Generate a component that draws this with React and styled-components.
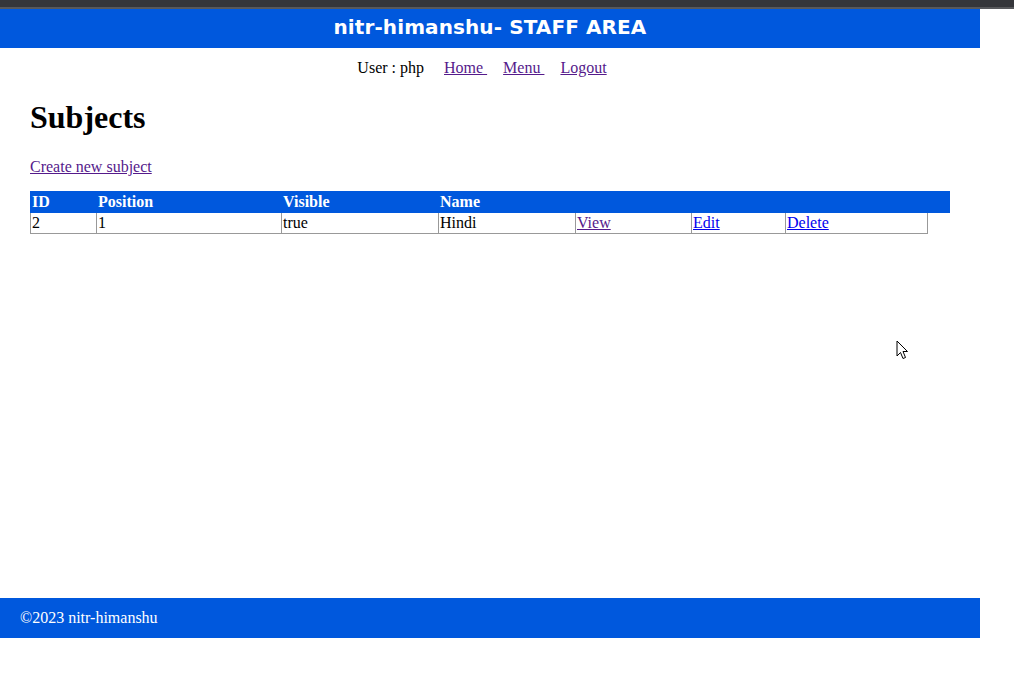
import React from "react";
import styled, { createGlobalStyle } from "styled-components";

const GlobalStyle = createGlobalStyle`
  html, body {
    margin: 0;
    padding: 0;
    background: #fff;
  }
  body {
    font-family: "Liberation Serif", "Times New Roman", serif;
    font-size: 16px;
    color: #000;
  }
`;

const COLUMNS = "66px 185px 157px 137px 116px 94px 143px";

const subjects = [{ id: 2, position: 1, visible: "true", name: "Hindi" }];

export default function App() {
  return (
    <>
      <GlobalStyle />
      <Page>
        <BrowserBar />
        <Header>nitr-himanshu- STAFF AREA</Header>
        <Body>
          <Nav>
            <User>User : php </User>
            <NavLink href="#" $visited>Home </NavLink>
            <NavLink href="#" $visited>Menu </NavLink>
            <NavLink href="#" $visited>Logout</NavLink>
          </Nav>
          <Main>
            <Title>Subjects</Title>
            <Para>
              <Link href="#" $visited>Create new subject</Link>
            </Para>
            <Table>
              <HeadRow>
                <HeadCell>ID</HeadCell>
                <HeadCell>Position</HeadCell>
                <HeadCell>Visible</HeadCell>
                <HeadCell>Name</HeadCell>
              </HeadRow>
              {subjects.map((s) => (
                <DataRow key={s.id}>
                  <Cell>{s.id}</Cell>
                  <Cell>{s.position}</Cell>
                  <Cell>{s.visible}</Cell>
                  <Cell>{s.name}</Cell>
                  <Cell>
                    <Link href="#" $visited>View</Link>
                  </Cell>
                  <Cell>
                    <Link href="#">Edit</Link>
                  </Cell>
                  <Cell $last>
                    <Link href="#">Delete</Link>
                  </Cell>
                </DataRow>
              ))}
            </Table>
          </Main>
        </Body>
        <Footer>©2023 nitr-himanshu</Footer>
        <Cursor width="13" height="21" viewBox="0 0 13 21">
          <path
            d="M1 1 L1 16 L4.5 12.5 L7 18.5 L9.5 17.5 L7 11.5 L11.5 11.5 Z"
            fill="#fff"
            stroke="#000"
            strokeWidth="1"
            strokeLinejoin="miter"
          />
        </Cursor>
      </Page>
    </>
  );
}

const Page = styled.div`
  position: relative;
  width: 1014px;
  height: 689px;
  overflow: hidden;
`;

const BrowserBar = styled.div`
  height: 7px;
  background: #35363a;
  border-bottom: 2px solid #58595c;
`;

const Header = styled.div`
  width: 980px;
  height: 39px;
  background: #0058dd;
  color: #fff;
  text-align: center;
  font-family: "DejaVu Sans", Verdana, sans-serif;
  font-weight: bold;
  font-size: 20px;
  line-height: 37px;
  letter-spacing: 0.1px;
`;

const Body = styled.div`
  width: 980px;
  height: 550px;
`;

const Nav = styled.div`
  padding-top: 11px;
  padding-right: 16px;
  text-align: center;
  line-height: normal;
`;

const User = styled.span`
  white-space: pre;
`;

const Link = styled.a`
  color: ${(p) => (p.$visited ? "#551a8b" : "#0000ee")};
  text-decoration: underline;
`;

const NavLink = styled(Link)`
  margin-left: 16px;
  white-space: pre;
`;

const Main = styled.div`
  padding: 0 30px;
`;

const Title = styled.h1`
  font-size: 32px;
  font-weight: bold;
  margin: 22.4px 0 21.4px;
`;

const Para = styled.p`
  margin: 16px 0 15px;
`;

const Table = styled.div`
  display: flex;
  flex-direction: column;
`;

const HeadRow = styled.div`
  display: grid;
  grid-template-columns: ${COLUMNS};
  width: 920px;
  height: 22px;
  background: #0058dd;
  color: #fff;
  font-weight: bold;
  line-height: 21px;
`;

const HeadCell = styled.div`
  padding-left: 2px;
`;

const DataRow = styled.div`
  display: grid;
  grid-template-columns: ${COLUMNS};
  width: 898px;
  border-bottom: 1px solid #999;
  line-height: 20px;
`;

const Cell = styled.div`
  border-left: 1px solid #999;
  border-right: ${(p) => (p.$last ? "1px solid #999" : "none")};
  padding-left: 1px;
`;

const Footer = styled.div`
  width: 980px;
  height: 40px;
  box-sizing: border-box;
  padding-left: 20px;
  background: #0058dd;
  color: #fff;
  line-height: 39px;
`;

const Cursor = styled.svg`
  position: absolute;
  left: 896px;
  top: 340px;
`;
